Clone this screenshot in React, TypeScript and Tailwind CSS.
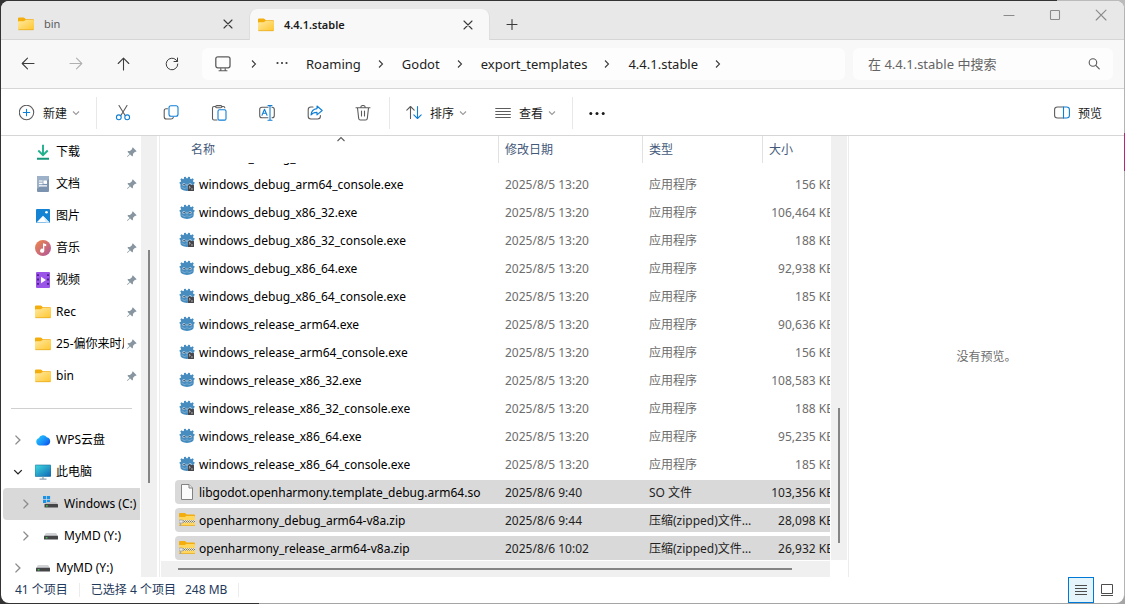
import { useId, type ReactNode } from "react";
import { BsPinAngleFill } from "react-icons/bs";

const FONT = "font-['Noto_Sans','Noto_Sans_CJK_SC',sans-serif]";
const BLUE = "#0f7fd6";
const GREY = "#5c5c5c";

/* ---------- Icons ---------- */

function FolderIcon() {
  const id = useId();
  return (
    <svg width="16" height="16" viewBox="0 0 16 16" className="shrink-0" aria-hidden="true">
      <linearGradient id={id} x1="0" y1="0" x2="1" y2="1">
        <stop offset="0" stopColor="#ffe9a0" />
        <stop offset="1" stopColor="#ffc62e" />
      </linearGradient>
      <path d="M0 2.5q0-1 1-1h4.6q.6 0 1 .5l1.2 1.2H15q1 0 1 1V6H0z" fill="#f3ad0c" />
      <path d="M0 6q0-.8.8-.8h4.7q.5 0 .9-.4l.5-.4q.4-.4.9-.4H15q1 0 1 1v8q0 1-1 1H1q-1 0-1-1z" fill={`url(#${id})`} />
      <path d="M.4 13.7h15.2" stroke="#e5a81f" strokeWidth=".7" />
    </svg>
  );
}

function ZipIcon() {
  return (
    <svg width="16" height="16" viewBox="0 0 16 16" className="shrink-0" aria-hidden="true">
      <path d="M0 2q0-.9.9-.9h4.700q.6 0 1 .5l1 1H15q1 0 1 1V6H0z" fill="#f3ad0c" />
      <path d="M0 5h6l1-1h8q1 0 1 1v8q0 1-1 1H1q-1 0-1-1z" fill="#ffd75e" />
      <path d="M0 13.500h16" stroke="#eab63a" />
      <path d="M3 8h13v2.500H3z" fill="#efe6c4" />
      <path d="M3 9.500h13" stroke="#77756c" strokeWidth="1" strokeDasharray="1 1" />
      <path d="M4 8.500h12M4 10.500h12" stroke="#a9a592" strokeWidth="1" strokeDasharray="1 1" />
      <rect x="0" y="8" width="4" height="3" rx=".8" fill="#e6e6e6" stroke="#8f8f8f" strokeWidth=".6" />
      <path d="M1.500 11v3" stroke="#a8a8a8" strokeWidth="1.400" />
    </svg>
  );
}

function FileIcon() {
  return (
    <svg width="16" height="16" viewBox="0 0 16 16" className="shrink-0" aria-hidden="true">
      <path d="M2.500.5h7.500l3.500 3.500v11.500h-11z" fill="#fbfbfb" stroke="#828282" />
      <path d="M10 .5V4h3.500" fill="#e8e8e8" stroke="#828282" />
    </svg>
  );
}

function GodotIcon({ terminal }: { terminal: boolean }) {
  return (
    <svg width="16" height="16" viewBox="0 0 16 16" className="shrink-0" aria-hidden="true">
      <path
        d="M5 1l1.700-.3.700 1.600h1.200l.7-1.600L11 1l.2 1.700.9.500 1.400-1 1.300 1.300-.9 1.400.3.800 1.300.2v1.700l-.8.400V11q0 3.700-6.700 3.900Q1.400 14.700 1.400 11V8L.6 7.600V5.900l1.300-.2.300-.8-.9-1.400 1.300-1.300 1.400 1 .9-.5z"
        fill="#478cbf"
      />
      <circle cx="4.900" cy="8.500" r="1.500" fill="#b9d3e6" />
      <circle cx="11.100" cy="8.500" r="1.500" fill="#b9d3e6" />
      <circle cx="5.100" cy="8.600" r=".9" fill="#4a5560" />
      <circle cx="10.900" cy="8.600" r=".9" fill="#4a5560" />
      <path d="M8 8.300v1.500" stroke="#b9d3e6" strokeWidth=".9" strokeLinecap="round" />
      <path d="M2.500 11.200l1.600.2.3 1 1.800.2.400-.7h2.800l.4.700 1.800-.2.300-1 1.600-.2" fill="none" stroke="#9cc1dc" strokeWidth=".5" />
      {terminal && (
        <>
          <rect x="9" y="9" width="6" height="6" rx=".5" fill="#48484c" />
          <path d="M10 10.300l1.300 1-1.300 1M12 13h1.800" fill="none" stroke="#e6e6e6" strokeWidth=".7" />
        </>
      )}
    </svg>
  );
}

function Chevron({ dir, color = GREY, size = 8 }: { dir: "right" | "down" | "up"; color?: string; size?: number }) {
  const d = { right: "M2 .5L5.500 4 2 7.500", down: "M1 2.500l3 3 3-3", up: "M.5 5L4 1.500 7.500 5" }[dir];
  return (
    <svg width={size} height={size} viewBox="0 0 8 8" className="shrink-0" aria-hidden="true">
      <path d={d} fill="none" stroke={color} strokeWidth="1.100" />
    </svg>
  );
}

function Line({ children, size = 16, color = GREY }: { children: ReactNode; size?: number; color?: string }) {
  return (
    <svg
      width={size}
      height={size}
      viewBox="0 0 16 16"
      fill="none"
      stroke={color}
      strokeWidth="1.100"
      strokeLinecap="round"
      strokeLinejoin="round"
      className="shrink-0"
      aria-hidden="true"
    >
      {children}
    </svg>
  );
}

const CloseGlyph = ({ color = "#3a3a3a" }: { color?: string }) => (
  <Line size={16} color={color}>
    <path d="M4 4l8 8M12 4l-8 8" />
  </Line>
);

function DownloadIcon() {
  return (
    <svg width="16" height="16" viewBox="0 0 16 16" className="shrink-0" aria-hidden="true">
      <path d="M8 .8v10M3.300 6.500L8 11.200l4.700-4.700" fill="none" stroke="#1fb08e" strokeWidth="1.900" />
      <path d="M2 14.700h12" stroke="#14967a" strokeWidth="1.900" />
    </svg>
  );
}

function DocumentIcon() {
  return (
    <svg width="16" height="16" viewBox="0 0 16 16" className="shrink-0" aria-hidden="true">
      <rect x="2" y="0" width="12" height="16" rx="1" fill="#7b93ae" />
      <path d="M2 1q0-1 1-1h10q1 0 1 1v2L2 13z" fill="#9db2c8" />
      <path d="M4 5h3.500M4 7.300h3.500M4 9.800h8" stroke="#fff" strokeWidth="1.200" />
      <rect x="8.500" y="4.500" width="3.500" height="3.400" fill="#fff" />
    </svg>
  );
}

function PictureIcon() {
  return (
    <svg width="16" height="16" viewBox="0 0 16 16" className="shrink-0" aria-hidden="true">
      <rect x="1" y="1" width="14" height="14" rx="1" fill="#1583d3" />
      <path d="M1.500 14.500L8 7.800l6.500 6.700z" fill="#fff" />
      <path d="M8 7.800l6.500 6.700H11z" fill="#d9ecfa" />
      <circle cx="11.500" cy="4.300" r="1.300" fill="#fff" />
    </svg>
  );
}

function MusicIcon() {
  const id = useId();
  return (
    <svg width="16" height="16" viewBox="0 0 16 16" className="shrink-0" aria-hidden="true">
      <linearGradient id={id} x1="0" y1="0" x2="1" y2="1">
        <stop offset="0" stopColor="#ee8a4a" />
        <stop offset="1" stopColor="#b0549a" />
      </linearGradient>
      <circle cx="8" cy="8" r="8" fill={`url(#${id})`} />
      <path d="M8 3.200l3.200 1v2L9.300 5.700v5a2.100 2.100 0 1 1-1.300-1.900z" fill="#fff" />
    </svg>
  );
}

function VideoIcon() {
  return (
    <svg width="16" height="16" viewBox="0 0 16 16" className="shrink-0" aria-hidden="true">
      <rect x="1" y="0" width="14" height="16" rx="1" fill="#9a54e8" />
      <path d="M3 2.200v12M13 2.200v12" stroke="#3f1a78" strokeWidth="1.700" strokeDasharray="1.800 2.600" />
      <path d="M6 4.800L11 8l-5 3.200z" fill="#fff" />
    </svg>
  );
}

function CloudIcon() {
  const id = useId();
  return (
    <svg width="16" height="16" viewBox="0 0 16 16" className="shrink-0" aria-hidden="true">
      <linearGradient id={id} x1="0" y1=".2" x2="1" y2=".9">
        <stop offset="0" stopColor="#25c8fb" />
        <stop offset=".6" stopColor="#1688f7" />
        <stop offset="1" stopColor="#0c49e8" />
      </linearGradient>
      <path d="M4.700 13.500a3.700 3.700 0 0 1-.9-7.200A4.500 4.500 0 0 1 11.800 5.200a4.200 4.200 0 0 1-.4 8.300z" fill={`url(#${id})`} />
    </svg>
  );
}

function ComputerIcon() {
  const id = useId();
  return (
    <svg width="16" height="16" viewBox="0 0 16 16" className="shrink-0" aria-hidden="true">
      <linearGradient id={id} x1="0" y1="0" x2="1" y2="1">
        <stop offset="0" stopColor="#3fdbe0" />
        <stop offset="1" stopColor="#1065b4" />
      </linearGradient>
      <rect x="0" y="1" width="16" height="11.500" rx=".8" fill={`url(#${id})`} stroke="#1a6fa0" strokeWidth=".6" />
      <path d="M8 12.500v2.500M4.500 15.200h7" stroke="#8fa3b2" strokeWidth="1.300" />
    </svg>
  );
}

function DriveIcon({ windows = false }: { windows?: boolean }) {
  return (
    <svg width="16" height="16" viewBox="0 0 16 16" className="shrink-0" aria-hidden="true">
      {windows ? (
        <>
          <path d="M0 0h3.200v3.200H0zM3.900 0h3.200v3.200H3.900zM0 3.900h3.200v3.200H0zM3.900 3.900h3.200v3.200H3.900z" fill="#1a93e6" />
          <path d="M3.500 6h9.500l2 2.200H2z" fill="#c1c1c4" />
          <rect x="1.500" y="8" width="13.500" height="3.500" rx=".5" fill="#454548" />
          <rect x="3" y="9.300" width="1.700" height="1.200" fill="#43d35c" />
        </>
      ) : (
        <>
          <path d="M3 5h10l2 3H1z" fill="#d2d3d6" />
          <rect x="1" y="7.800" width="14" height="3.700" rx=".5" fill="#454548" />
          <rect x="2.700" y="9.200" width="1.800" height="1.200" fill="#43d35c" />
        </>
      )}
    </svg>
  );
}

/* ---------- Tab strip ---------- */

function Tab({ title, active = false }: { title: string; active?: boolean }) {
  return (
    <div
      className={
        active
          ? "-mb-px flex h-[31px] w-[241px] items-center rounded-t-lg border-x border-[#dedede] bg-[#f8f8f8] pr-[13px] pl-2"
          : "flex h-[30px] w-[248px] items-center pr-[13px] pl-[17px]"
      }
    >
      <FolderIcon />
      <span className={active ? "ml-[10px] flex-1 pt-px text-[11px] font-semibold text-[#1b1b1b]" : "ml-[10px] flex-1 pt-px text-[11px] text-[#5b5b5b]"}>
        {title}
      </span>
      <button aria-label={`关闭 ${title}`}>
        <CloseGlyph />
      </button>
    </div>
  );
}

function TabStrip() {
  return (
    <header className="flex h-[39px] items-end border-b border-[#d6d6d6] bg-[#e8e8e8]">
      <Tab title="bin" />
      <Tab title="4.4.1.stable" active />
      <button aria-label="新标签页" className="ml-[14px] flex h-[30px] items-center">
        <Line color="#3a3a3a">
          <path d="M8 3.500v10M3 8.500h10" />
        </Line>
      </button>
      <div className="ml-auto flex self-start">
        <button aria-label="最小化" className="flex h-[29px] w-[46px] items-center justify-center">
          <Line color="#8a8a8a">
            <path d="M3 7.500h10" />
          </Line>
        </button>
        <button aria-label="最大化" className="flex h-[29px] w-[46px] items-center justify-center">
          <Line color="#8a8a8a">
            <rect x="3.500" y="2.500" width="9" height="9" rx=".8" />
          </Line>
        </button>
        <button aria-label="关闭" className="flex h-[29px] w-[46px] items-center justify-center">
          <Line color="#8a8a8a">
            <path d="M3.200 2.200l9.800 9.800M13 2.200L3.200 12" />
          </Line>
        </button>
      </div>
    </header>
  );
}

/* ---------- Navigation row ---------- */

function NavButton({ label, color = "#3d3d3d", children }: { label: string; color?: string; children: ReactNode }) {
  return (
    <button aria-label={label} className="flex h-8 w-12 shrink-0 items-center justify-center">
      <Line color={color}>{children}</Line>
    </button>
  );
}

function NavigationRow() {
  const crumbs = ["Roaming", "Godot", "export_templates", "4.4.1.stable"];
  return (
    <div className="flex h-[49px] items-center border-b border-[#d6d6d6] bg-[#f8f8f8] pr-[11px] pl-[3px]">
      <NavButton label="后退">
        <path d="M14 7.500H2.200M7.500 2.200L2.200 7.500l5.300 5.300" />
      </NavButton>
      <NavButton label="前进" color="#b0b0b0">
        <path d="M2 7.500h11.800M8.500 2.200l5.300 5.300-5.300 5.300" />
      </NavButton>
      <NavButton label="向上">
        <path d="M7.500 14V2.200M2.200 7.500l5.300-5.300 5.300 5.300" />
      </NavButton>
      <NavButton label="刷新">
        <path d="M13.800 8A5.800 5.800 0 1 1 12.100 3.900L13.500 5.400M13.500 2v3.500H10" strokeWidth="1" />
      </NavButton>

      <nav aria-label="地址" className="ml-[6px] flex h-8 flex-1 items-center gap-[17px] rounded-md bg-[#fdfdfd] pl-[13px] text-[13px] text-[#1f1f1f]">
        <span className="mr-[2px]">
          <Line>
            <rect x=".8" y=".8" width="14.200" height="11" rx="2" strokeWidth="1.300" />
            <path d="M5.800 12.500v2M10.200 12.500v2M4 14.800h8" />
          </Line>
        </span>
        <Chevron dir="right" color="#3d3d3d" />
        <button aria-label="更多路径" className="px-px">
          <svg width="12" height="12" viewBox="0 0 12 12" fill="#3a3a3a" aria-hidden="true">
            <circle cx="1.500" cy="5" r="1.100" />
            <circle cx="6" cy="5" r="1.100" />
            <circle cx="10.500" cy="5" r="1.100" />
          </svg>
        </button>
        {crumbs.map((crumb) => (
          <div key={crumb} className="flex items-center gap-4">
            <button className="pt-[2px]">{crumb}</button>
            <Chevron dir="right" color="#3d3d3d" />
          </div>
        ))}
      </nav>

      <label className="ml-2 flex h-8 w-[260px] items-center rounded-md bg-[#fdfdfd] pr-3 pl-[15px]">
        <input
          type="search"
          aria-label="搜索"
          placeholder="在 4.4.1.stable 中搜索"
          className="min-w-0 flex-1 bg-transparent pt-[2px] text-[13px] text-[#222] outline-none placeholder:text-[#646464]"
        />
        <Line size={14}>
          <circle cx="6.800" cy="6.300" r="4.300" strokeWidth="1.300" />
          <path d="M10 9.500l4 4" strokeWidth="1.400" />
        </Line>
      </label>
    </div>
  );
}

/* ---------- Command bar ---------- */

function IconCommand({ label, children }: { label: string; children: ReactNode }) {
  return (
    <button aria-label={label} className="flex h-8 w-12 items-center justify-center">
      <Line>{children}</Line>
    </button>
  );
}

function MenuCommand({ label, children }: { label: string; children: ReactNode }) {
  return (
    <button className="flex h-8 items-center">
      <Line>{children}</Line>
      <span className="mr-[5px] ml-2 pt-px">{label}</span>
      <Chevron dir="down" color="#9a9a9a" />
    </button>
  );
}

const Separator = () => <div className="h-8 w-px shrink-0 bg-[#e8e8e8]" />;

function CommandBar() {
  return (
    <div className="flex h-[47px] items-center border-b border-[#d6d6d6] bg-white pt-[2px] pr-[22px] pl-[18px] text-xs text-[#1b1b1b]">
      <MenuCommand label="新建">
        <circle cx="7.500" cy="7.500" r="7.200" />
        <path d="M7.500 4.300v6.400M4.300 7.500h6.400" stroke={BLUE} />
      </MenuCommand>
      <div className="ml-4">
        <Separator />
      </div>
      <div className="mx-[2px] flex">
        <IconCommand label="剪切">
          <path d="M4 .5l6 9.800M12 .5l-6 9.800" />
          <circle cx="3.800" cy="12.300" r="2.400" stroke={BLUE} />
          <circle cx="12.200" cy="12.300" r="2.400" stroke={BLUE} />
        </IconCommand>
        <IconCommand label="复制">
          <path d="M4.500 3.700H3.200q-2 0-2 2v6q0 2.300 2.300 2.300H8q2 0 2.300-1.700" />
          <rect x="6" y=".7" width="9" height="10.500" rx="2" stroke={BLUE} />
        </IconCommand>
        <IconCommand label="粘贴">
          <path d="M6 15H3q-1.500 0-1.500-1.500V3q0-1.500 1.500-1.500h1.500M11 1.500h1.300q1.500 0 1.500 1.300" />
          <rect x="4.700" y=".6" width="6.200" height="2.200" rx="1.100" />
          <rect x="7" y="4.800" width="8" height="10.300" rx="1.400" stroke={BLUE} />
        </IconCommand>
        <IconCommand label="重命名">
          <path d="M9 2.300H3Q.7 2.300.7 4.600v5.800q0 2.300 2.300 2.300h6M13 2.300q2.300 0 2.300 2.300v5.800q0 2.300-2.300 2.300" />
          <path d="M9 .6h4M11 .6v14.600M9 15.200h4M3 10.300l2.500-6L8 10.300M4 8.300h3" stroke={BLUE} />
        </IconCommand>
        <IconCommand label="共享">
          <path d="M6 2H4Q1.200 2 1.200 4.700v6.600Q1.200 14 3.900 14h6.800q2.700 0 2.700-2.700v-.8" />
          <path d="M10 1l5.200 4.500L10 9.900V7.400q-4-.1-6 2.600.5-5.800 6-6.400z" stroke={BLUE} />
        </IconCommand>
        <IconCommand label="删除">
          <path d="M1 2.700h14M5.800 2.500Q5.800.5 8 .5t2.200 2M2.500 3l1.200 10.500Q3.900 15 5.300 15h5.400q1.400 0 1.600-1.500L13.500 3M6.500 6v5M9.500 6v5" />
        </IconCommand>
      </div>
      <Separator />
      <div className="ml-4 flex gap-7">
        <MenuCommand label="排序">
          <path d="M4.500 13.500V1.500M.8 5.200l3.700-3.700 3.700 3.700" />
          <path d="M11.500 1.500v12M7.800 9.800l3.700 3.700 3.700-3.700" stroke={BLUE} />
        </MenuCommand>
        <MenuCommand label="查看">
          <path d="M.3 3.500h15.500M.3 6.500h15.500M.3 9.500h15.500M.3 12.500h15.500" strokeLinecap="butt" />
        </MenuCommand>
      </div>
      <div className="mx-4">
        <Separator />
      </div>
      <button aria-label="更多选项">
        <svg width="16" height="16" viewBox="0 0 16 16" fill="#1b1b1b" aria-hidden="true">
          <circle cx="1.800" cy="8.500" r="1.500" />
          <circle cx="8" cy="8.500" r="1.500" />
          <circle cx="14.200" cy="8.500" r="1.500" />
        </svg>
      </button>
      <button className="ml-auto flex items-center gap-2">
        <Line>
          <path d="M9.500 2H3.500Q.6 2 .6 4.500v6q0 2.500 2.900 2.500h6" />
          <path d="M9.500 2h3q2.900 0 2.900 2.500v6q0 2.500-2.900 2.500h-3z" stroke={BLUE} />
        </Line>
        <span className="pt-px">预览</span>
      </button>
    </div>
  );
}

/* ---------- Sidebar ---------- */

const pinned: { name: string; icon: ReactNode }[] = [
  { name: "下载", icon: <DownloadIcon /> },
  { name: "文档", icon: <DocumentIcon /> },
  { name: "图片", icon: <PictureIcon /> },
  { name: "音乐", icon: <MusicIcon /> },
  { name: "视频", icon: <VideoIcon /> },
  { name: "Rec", icon: <FolderIcon /> },
  { name: "25-偏你来时风", icon: <FolderIcon /> },
  { name: "bin", icon: <FolderIcon /> },
];

type Node = { name: string; icon: ReactNode; nested?: boolean; open?: boolean; selected?: boolean };

const tree: Node[] = [
  { name: "WPS云盘", icon: <CloudIcon /> },
  { name: "此电脑", icon: <ComputerIcon />, open: true },
  { name: "Windows (C:)", icon: <DriveIcon windows />, nested: true, selected: true },
  { name: "MyMD (Y:)", icon: <DriveIcon />, nested: true },
  { name: "MyMD (Y:)", icon: <DriveIcon /> },
];

function Sidebar() {
  return (
    <aside className="flex w-[156px] shrink-0">
      <nav aria-label="导航窗格" className="min-w-0 flex-1 overflow-hidden pr-px pl-[2px] text-xs text-black">
        <ul>
          {pinned.map((item) => (
            <li key={item.name}>
              <button className="flex h-8 w-full items-center pr-[3px] pl-8 text-left">
                {item.icon}
                <span className="ml-[5px] min-w-0 flex-1 overflow-hidden whitespace-nowrap">{item.name}</span>
                <BsPinAngleFill size={11} color="#8796a1" className="ml-[2px] shrink-0" />
              </button>
            </li>
          ))}
        </ul>
        <hr className="mt-4 mr-2 mb-[15px] ml-2 border-[#d0d0d0]" />
        <ul>
          {tree.map((item, i) => (
            <li key={i} className={item.selected ? "rounded-l-sm bg-[#d9d9d9]" : ""}>
              <button className={item.nested ? "flex h-8 w-full items-center pl-[18px]" : "flex h-8 w-full items-center pl-[10px]"}>
                <Chevron dir={item.open ? "down" : "right"} color={item.open ? "#222" : "#8c8c8c"} size={10} />
                <span className="ml-3">{item.icon}</span>
                <span className="ml-[5px] whitespace-nowrap">{item.name}</span>
              </button>
            </li>
          ))}
        </ul>
      </nav>
      <div className="w-4 bg-[#f0f0f0] pt-[114px]">
        <div className="ml-[7px] h-[233px] w-[2px] bg-[#858585]" />
      </div>
    </aside>
  );
}

/* ---------- File list ---------- */

type FileRow = { name: string; date: string; type: string; size: string; kind: "exe" | "file" | "zip" };

const exe = (name: string, size: string): FileRow => ({ name, size, date: "2025/8/5 13:20", type: "应用程序", kind: "exe" });

const files: FileRow[] = [
  exe("windows_debug_arm64_console.exe", "156 KB"),
  exe("windows_debug_x86_32.exe", "106,464 KB"),
  exe("windows_debug_x86_32_console.exe", "188 KB"),
  exe("windows_debug_x86_64.exe", "92,938 KB"),
  exe("windows_debug_x86_64_console.exe", "185 KB"),
  exe("windows_release_arm64.exe", "90,636 KB"),
  exe("windows_release_arm64_console.exe", "156 KB"),
  exe("windows_release_x86_32.exe", "108,583 KB"),
  exe("windows_release_x86_32_console.exe", "188 KB"),
  exe("windows_release_x86_64.exe", "95,235 KB"),
  exe("windows_release_x86_64_console.exe", "185 KB"),
  { name: "libgodot.openharmony.template_debug.arm64.so", date: "2025/8/6 9:40", type: "SO 文件", size: "103,356 KB", kind: "file" },
  { name: "openharmony_debug_arm64-v8a.zip", date: "2025/8/6 9:44", type: "压缩(zipped)文件夹", size: "28,098 KB", kind: "zip" },
  { name: "openharmony_release_arm64-v8a.zip", date: "2025/8/6 10:02", type: "压缩(zipped)文件夹", size: "26,932 KB", kind: "zip" },
];

function FileGlyph({ file }: { file: FileRow }) {
  if (file.kind === "zip") return <ZipIcon />;
  if (file.kind === "file") return <FileIcon />;
  return <GodotIcon terminal={file.name.includes("console")} />;
}

function FileTableRow({ file }: { file: FileRow }) {
  const selected = file.kind !== "exe";
  const cell = selected ? "flex h-6 items-center bg-[#d9d9d9] pt-[2px] text-[#1f1f1f]" : "flex h-6 items-center pt-[2px] text-[#6d6d6d]";
  return (
    <tr className="h-7" aria-selected={selected}>
      <td className="p-0 pl-[15px]">
        <div className={selected ? "flex h-6 items-center gap-1 rounded-l-sm bg-[#d9d9d9] pl-1 text-black" : "flex h-6 items-center gap-1 pl-1 text-black"}>
          <FileGlyph file={file} />
          <span className="pt-[2px] whitespace-nowrap">{file.name}</span>
        </div>
      </td>
      <td className="p-0">
        <div className={`${cell} pl-[6px]`}>{file.date}</div>
      </td>
      <td className="p-0">
        <div className={`${cell} pl-[6px]`}>
          <span className="w-[104px] truncate">{file.type}</span>
        </div>
      </td>
      <td className="p-0">
        <div className={`${cell} justify-end pr-[13px]`}>{file.size}</div>
      </td>
    </tr>
  );
}

function FileList() {
  return (
    <main className="ml-[2px] flex min-w-0 flex-1 flex-col border-x border-[#ececec]">
      <div className="flex min-h-0 flex-1">
        <div className="min-w-0 flex-1 overflow-hidden">
          <table className="w-[687px] table-fixed border-collapse text-left text-xs">
            <colgroup>
              <col className="w-[339px]" />
              <col className="w-[144px]" />
              <col className="w-[120px]" />
              <col className="w-[84px]" />
            </colgroup>
            <thead className="text-[#44597a]">
              <tr className="h-[27px]">
                <th className="relative p-0 font-normal">
                  <div className="h-[27px] border-r border-[#e2e2e2] pl-[31px] leading-[27px]">名称</div>
                  <span className="absolute top-0 left-[177px]">
                    <Chevron dir="up" />
                  </span>
                </th>
                <th className="p-0 font-normal">
                  <div className="h-[27px] border-r border-[#e2e2e2] pl-[6px] leading-[27px]">修改日期</div>
                </th>
                <th className="p-0 font-normal">
                  <div className="h-[27px] border-r border-[#e2e2e2] pl-[6px] leading-[27px]">类型</div>
                </th>
                <th className="p-0 font-normal">
                  <div className="pl-[6px] leading-[27px]">大小</div>
                </th>
              </tr>
            </thead>
            <tbody>
              <tr className="h-[7px]">
                <td colSpan={4} className="p-0">
                  <div className="flex h-[7px] items-end overflow-hidden pl-[39px] leading-6 text-black">windows_debug_arm64.exe</div>
                </td>
              </tr>
              {files.map((file) => (
                <FileTableRow key={file.name} file={file} />
              ))}
            </tbody>
          </table>
        </div>
        <div className="mr-px ml-px flex w-4 flex-col justify-end bg-[#f0f0f0] pb-[17px]">
          <div className="ml-[7px] h-[135px] w-[2px] bg-[#858585]" />
        </div>
      </div>
      <div className="mt-px mr-[18px] ml-px flex h-4 items-center bg-[#f0f0f0] pr-[38px] pl-[17px]">
        <div className="h-[2px] flex-1 bg-[#858585]" />
      </div>
    </main>
  );
}

/* ---------- Status bar ---------- */

function StatusBar() {
  return (
    <footer className="flex h-[26px] items-center pr-1 pl-[14px] text-xs text-[#1e395b]">
      <span>41 个项目</span>
      <div className="mx-[11px] h-[14px] w-px bg-[#ececec]" />
      <span>已选择 4 个项目</span>
      <span className="ml-[9px]">248 MB</span>
      <div className="ml-[11px] h-[14px] w-px bg-[#ececec]" />
      <button aria-label="详细信息视图" className="ml-auto flex h-[26px] w-[26px] items-center justify-center border border-[#0078d7] bg-[#e5f3fb]">
        <svg width="12" height="12" viewBox="0 0 12 12" stroke="#4c4c4c" aria-hidden="true">
          <path d="M0 1.500h12M0 4.500h12M0 7.500h12M0 10.500h12" />
        </svg>
      </button>
      <button aria-label="大图标视图" className="flex h-[26px] w-[26px] items-center justify-center">
        <svg width="12" height="12" viewBox="0 0 12 12" fill="none" stroke="#4c4c4c" aria-hidden="true">
          <path d="M.5.5h11v9H.5zM0 11.500h12" />
        </svg>
      </button>
    </footer>
  );
}

export default function App() {
  return (
    <div
      className={`${FONT} h-screen w-full overflow-hidden p-px [background:linear-gradient(#b4287a,#b4287a)_right_133px/1px_38px_no-repeat,linear-gradient(to_right,#333_94%,#bbb_94%)_top/100%_8px_no-repeat,linear-gradient(to_right,#333_23%,#a5a5a5_23%)_bottom/100%_8px_no-repeat,linear-gradient(to_right,#333_50%,#b4b4b4_50%)]`}
    >
      <div className="flex h-full flex-col overflow-hidden rounded-lg bg-white">
        <TabStrip />
        <NavigationRow />
        <CommandBar />
        <div className="flex min-h-0 flex-1">
          <Sidebar />
          <FileList />
          <section aria-label="预览窗格" className="flex w-[275px] shrink-0 items-center justify-center text-xs text-[#6d6d6d]">
            没有预览。
          </section>
        </div>
        <StatusBar />
      </div>
    </div>
  );
}
